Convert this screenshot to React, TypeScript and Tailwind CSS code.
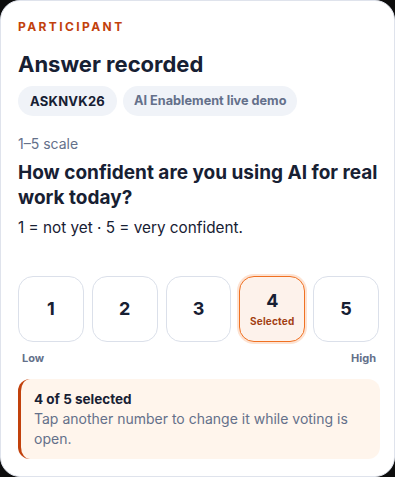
export default function App() {
  const options = [1, 2, 3, 4, 5];
  const selected = 4;

  return (
    <div className="h-[477px] w-[395px] bg-[#0d0d0d] font-['Inter',sans-serif]">
      <div className="flex h-full flex-col rounded-[20px] border border-[#dfe3ec] bg-white pl-[17px] pr-[15px] pt-[18px]">
        {/* Header */}
        <p className="text-[12px] font-bold leading-[16px] tracking-[0.2em] text-[#c2410c]">
          PARTICIPANT
        </p>
        <h1 className="mt-[15px] text-[22px] font-bold leading-[28px] text-[#172033]">
          Answer recorded
        </h1>
        <div className="mt-[8px] flex gap-[6px]">
          <span className="rounded-full bg-[#f0f3f8] px-[12px] py-[7px] text-[13px] font-bold leading-[16px] tracking-[0.02em] text-[#172033]">
            ASKNVK26
          </span>
          <span className="rounded-full bg-[#f0f3f8] px-[11px] py-[7px] text-[12.7px] font-bold leading-[16px] text-[#64708a]">
            AI Enablement live demo
          </span>
        </div>

        {/* Question */}
        <p className="mt-[18px] text-[14px] leading-[20px] text-[#64708a]">1–5 scale</p>
        <h2 className="mt-[6px] text-[19px] font-bold leading-[25px] text-[#172033]">
          How confident are you using AI for real work today?
        </h2>
        <p className="mt-[7px] text-[15.3px] leading-[22px] text-[#172033]">
          1 = not yet · 5 = very confident.
        </p>

        {/* Scale */}
        <div className="mt-[37px] flex gap-[8px]">
          {options.map((n) =>
            n === selected ? (
              <div
                key={n}
                className="flex h-[66px] w-[66px] flex-col items-center justify-center rounded-[15px] border border-[#f07122] bg-[#fdf2eb] shadow-[0_0_0_2px_#fde3d3]"
              >
                <span className="text-[18px] font-bold leading-[22px] text-[#172033]">{n}</span>
                <span className="mt-[2px] text-[10px] font-bold leading-[14px] tracking-[0.02em] text-[#a33f14]">
                  Selected
                </span>
              </div>
            ) : (
              <div
                key={n}
                className="flex h-[66px] w-[66px] items-center justify-center rounded-[15px] border border-[#dbe0ea] bg-white"
              >
                <span className="text-[18px] font-bold leading-[22px] text-[#172033]">{n}</span>
              </div>
            )
          )}
        </div>
        <div className="mt-[8px] flex w-[362px] justify-between px-[4px] text-[11px] font-bold leading-[16px] text-[#64708a]">
          <span>Low</span>
          <span>High</span>
        </div>

        {/* Status callout */}
        <div className="mt-[13px] w-[362px] rounded-[12px] border-l-[3px] border-[#c2410c] bg-[#fff5ec] py-[10px] pl-[13px] pr-[12px]">
          <p className="text-[13.5px] font-bold leading-[20px] text-[#172033]">4 of 5 selected</p>
          <p className="text-[14px] leading-[20px] text-[#64708a]">
            Tap another number to change it while voting is open.
          </p>
        </div>
      </div>
    </div>
  );
}
